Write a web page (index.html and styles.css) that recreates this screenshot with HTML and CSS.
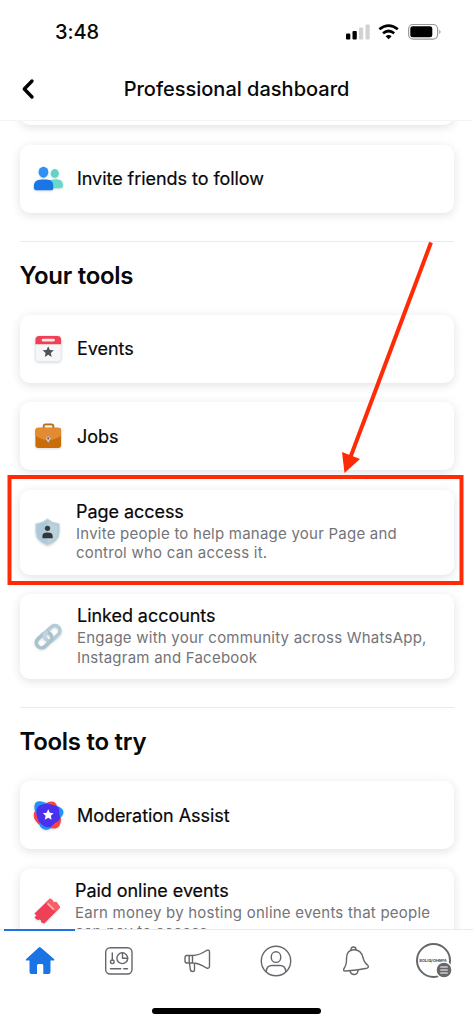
FILE: index.html
```html
<!DOCTYPE html>
<html lang="en">
<head>
<meta charset="utf-8">
<title>Professional dashboard</title>
<link rel="stylesheet" href="styles.css">
</head>
<body>
<div class="phone">
  <header class="top">
    <div class="status">
      <span class="time">3:48</span>
      <svg class="status-icons" width="98" height="20" viewBox="0 0 98 20">
        <rect x="1" y="12.500" width="4.300" height="6" rx="1"/>
        <rect x="7.500" y="10" width="4.300" height="8.500" rx="1"/>
        <g fill="#d2d2d2"><rect x="14" y="6.500" width="4.200" height="12" rx="1"/><rect x="20.500" y="3.500" width="4.200" height="15" rx="1"/></g>
        <g fill="none" stroke="#000" stroke-width="2.700"><path d="M34.400 8.300Q43.600 .8 52.800 8.300"/><path d="M38 12.200Q43.600 7.800 49.200 12.200"/></g>
        <path d="M40.600 15.200Q43.600 13 46.600 15.200L43.600 18.300Z"/>
        <rect x="63.600" y="3.500" width="29" height="14.600" rx="4.500" fill="none" stroke="#999" stroke-width="1.200"/>
        <rect x="65.300" y="5.300" width="22" height="11" rx="2.500"/>
        <path d="M94.300 8.500Q96.800 10.800 94.300 13Z" fill="#999"/>
      </svg>
    </div>
    <div class="titlebar">
      <svg class="back" width="16" height="22" viewBox="0 0 16 22"><path d="M12 3L4.300 11L12 19" fill="none" stroke="#000" stroke-width="3.400" stroke-linecap="round" stroke-linejoin="round"/></svg>
      <h1 class="title">Professional dashboard</h1>
    </div>
  </header>

  <main class="content">
    <div class="card card-previous"></div>
    <div class="card">
      <svg class="icon" viewBox="0 0 32 32">
        <ellipse cx="22.500" cy="10.800" rx="4.200" ry="4.500" fill="#62d3c4"/><path d="M17 17.800Q31 14 31 23Q31 26 28 26H17Z" fill="#66d9ca"/>
        <ellipse cx="10.800" cy="9.500" rx="5" ry="5.600" fill="#2e91f3"/><path d="M.8 25.500Q0 17 9 17H14Q22 17 21 26Q21 28 19 28H3Q1 28 .8 25.500Z" fill="#1976e8"/>
      </svg>
      <div class="name">Invite friends to follow</div>
    </div>
    <section class="section">
      <h2 class="heading">Your tools</h2>
      <div class="list">
        <div class="card">
          <svg class="icon" viewBox="0 0 32 32">
            <rect x="2.500" y="3" width="26.500" height="26.500" rx="4" fill="#f5f7f8" stroke="#e5e8eb" stroke-width=".8"/>
            <path d="M2.500 11.500V7Q2.500 3 6.500 3H25Q29 3 29 7V11.500Z" fill="#f13f55"/><rect x="9" y="6" width="13.500" height="2.700" rx="1.300" fill="#ffe9eb"/>
            <path d="M15.700 13.700L17.400 17.500L21.500 17.900L18.400 20.600L19.300 24.700L15.700 22.500L12.100 24.700L13 20.600L9.900 17.900L14 17.500Z" fill="#4d5358"/>
          </svg>
          <div class="name">Events</div>
        </div>
        <div class="card">
          <svg class="icon" viewBox="0 0 32 32">
            <path d="M11 8V5.500Q11 3.500 13 3.500H19Q21 3.500 21 5.500V8" fill="none" stroke="#bd6b0b" stroke-width="1.800"/>
            <rect x="2.500" y="7" width="26.500" height="20.800" rx="2.500" fill="#c96c09"/><path d="M2.500 15V9.500Q2.500 7 5 7H26.500Q29 7 29 9.500V15Q22 20 15.700 19.500Q9 20 2.500 15Z" fill="#e28b31"/>
            <path d="M15.700 15.500L18.300 18L15.700 22.500L13.100 18Z" fill="#cad1d5"/><circle cx="15.700" cy="18" r="1.100" fill="#5e6264"/>
          </svg>
          <div class="name">Jobs</div>
        </div>
        <div class="card tall">
          <svg class="icon" viewBox="0 0 32 32">
            <path d="M15 2Q20 6.500 27 7V16Q27 25 15 29Q3 25 3 16V7Q10 6.500 15 2Z" fill="#adc8d6" stroke="#c6d9e2" stroke-width="1"/>
            <path d="M15 4V27.500Q25 24 25.500 16V8.500Q19 7.500 15 4Z" fill="#bdd1dc"/>
            <circle cx="15" cy="11.700" r="2.700" fill="#383d40"/><path d="M9.700 22V19.500Q9.700 16 15 16Q20.300 16 20.300 19.500V22Z" fill="#30363a"/>
          </svg>
          <div class="copy access">
            <div class="name">Page access</div>
            <div class="desc">Invite people to help manage your Page and<br>control who can access it.</div>
          </div>
        </div>
        <div class="card tall">
          <svg class="icon" viewBox="0 0 32 32">
            <g fill="none" stroke-width="3.700"><rect x="10.800" y="7.300" width="18" height="10.600" rx="5.300" transform="rotate(-43 19.800 12.600)" stroke="#b4ccd7"/><rect x="2.500" y="14.500" width="18" height="10.600" rx="5.300" transform="rotate(-43 11.500 19.800)" stroke="#a9c2ce"/><path d="M14.500 10.500L12.500 13Q10.500 16 14 19" stroke="#bfd4de"/></g>
          </svg>
          <div class="copy">
            <div class="name">Linked accounts</div>
            <div class="desc">Engage with your community across WhatsApp,<br>Instagram and Facebook</div>
          </div>
        </div>
      </div>
    </section>
    <section class="section">
      <h2 class="heading">Tools to try</h2>
      <div class="list">
        <div class="card">
          <svg class="icon" viewBox="0 0 32 32">
            <path d="M14 3Q21 -.5 24 4L29 20Q28.500 28 23 29.500L10 28Q4 24 2 20Q-1 15 3 10Z" fill="#fa453f"/>
            <path d="M1.500 6Q2 0 9 1.500L27 7Q34 11 30 16.500L18 29.500Q12 33 7.500 27.500L2.500 13Q1 9 1.500 6Z" fill="#2492f1"/>
            <path d="M14.500 3Q21 0 24 5.500L18 9ZM2.500 14Q-.5 18 3.500 22L7 25V16ZM18 29Q26 31 28.200 19L20 23Z" fill="#fa453f"/>
            <path d="M3.500 11Q4 6 8.500 5L14.500 3.500L24 6Q28 8 27 13L28 18.500Q27 22 23 23.500L18 28Q14 29 10 26L6 22.500Q3 17 3.500 11Z" fill="#4931ed"/>
            <path d="M15.700 9.500L17.400 13.200L21.300 13.600L18.400 16.300L19.200 20.300L15.700 18.300L12.200 20.300L13 16.300L10.100 13.600L14 13.200Z" fill="#fff"/>
          </svg>
          <div class="name moderation">Moderation Assist</div>
        </div>
        <div class="card tall">
          <svg class="icon" viewBox="0 0 32 32">
            <path d="M1.500 18L17.500 2.500L20 4Q20.500 7 24 6L28 11.500L26 14L11.500 28.500L8.500 27Q8.500 23 5 25L1.500 22.500L3.500 20Z" fill="#ee4058"/><path d="M17.500 2.500L20 4Q20.500 7 24 6L28 11.500L23 16L13 7Z" fill="#f26268"/><path d="M15 7.500L21.500 14" stroke="#ffb2a5" stroke-width="1.800"/>
          </svg>
          <div class="copy paid-copy">
            <div class="name">Paid online events</div>
            <div class="desc">Earn money by hosting online events that people<br>can pay to access.</div>
          </div>
        </div>
      </div>
    </section>
  </main>

  <nav class="tabs">
    <div class="tab active"><svg width="32" height="32" viewBox="0 0 32 32"><path d="M15.500 2Q16 1.800 17 2.700L30 14Q31 15.500 29 15.500H26.500V27Q26.500 29 24.500 29H19.300V20.500Q19.300 19 18 19H14.500Q13 19 13 20.500V29H7.500Q5.500 29 5.500 27V15.500H3Q1 15.500 2.200 14L14.500 2.800Z" fill="#1b74e4"/></svg></div>
    <div class="tab"><svg width="32" height="32" viewBox="0 0 32 32"><rect x="2.700" y="2.700" width="26.300" height="26.300" rx="4.500"/><path d="M9.300 8V15"/><circle cx="9.300" cy="16.800" r="1.800"/><circle cx="19.300" cy="13.200" r="5.400"/><path d="M19.500 7.800V13.200H24.700M7.500 23.700H17.800M20.700 23.700H24.500"/></svg></div>
    <div class="tab"><svg width="32" height="32" viewBox="0 0 32 32"><path d="M10.500 10.500H5Q3 10.500 3 13V15.500Q3 18 5 18H10.500M7.200 10.500V18M10.500 10.500V18Q17 18 24.500 23Q27.500 24 27.500 21V7Q27.500 4.200 24.500 5.500Q17 10.500 10.500 10.500M7.500 18L8.300 24.500Q8.700 26.500 10.700 26.500Q12.700 26.500 12.500 24.500V18.200"/></svg></div>
    <div class="tab"><svg width="32" height="32" viewBox="0 0 32 32"><circle cx="16" cy="16" r="14.700"/><rect x="11.300" y="6.800" width="9.400" height="10.600" rx="4.700"/><path d="M6.300 26.500Q6.500 20.500 12 20.500H20Q25.500 20.500 25.700 26.500"/></svg></div>
    <div class="tab"><svg width="32" height="32" viewBox="0 0 32 32"><path d="M12.200 5.500Q11.500 2 14.500 2Q17 2 17 4.500M5.300 25.800Q4.300 25.600 4.800 24Q7.500 20 7.500 16V13.500Q7.500 4.700 15 4.700Q22 4.700 24 12.500Q25 17.500 29 20.500Q30 22.500 28 23.200Q18 25.500 6.500 26Z"/><path d="M11 26Q12 29.700 15.500 29.500Q19 29 19 25"/></svg></div>
    <div class="tab"><div class="avatar"><span class="brand">SOLIQ/OHMIA</span><svg class="badge" width="18" height="18" viewBox="0 0 18 18"><circle cx="9" cy="9" r="8" fill="#65676b" stroke="#fff"/><path d="M5.700 6H12.300M5.700 9H12.300M5.700 12H12.300" stroke="#fff" stroke-width="1.200"/></svg></div></div>
  </nav>
  <div class="home-indicator"></div>
  <svg class="annotation" width="473" height="1024" viewBox="0 0 473 1024"><rect x="9.500" y="477" width="452" height="106" fill="none" stroke="#ff2b06" stroke-width="4"/><path d="M431 242.500L350.500 457" stroke="#ff2b06" stroke-width="4"/><path d="M342 452L360 459L344.500 473Z" fill="#ff2b06"/></svg>
</div>
</body>
</html>
```
FILE: styles.css
```css
* { box-sizing: border-box; }
body { margin: 0; background: #fff; color: #080809; font-family: Inter, "Liberation Sans", sans-serif; }
.phone { position: relative; display: flex; flex-direction: column; width: 473px; height: 1024px; overflow: hidden; background: #fff; }
.top { flex: none; height: 121px; border-bottom: 1px solid #f4f4f4; }
.status { display: flex; justify-content: space-between; padding: 20px 30px 0 55px; height: 60px; }
.status-icons { margin-top: .5px; }
.time { font-size: 20px; line-height: 25px; font-weight: 500; letter-spacing: -.1px; }
.titlebar { display: flex; align-items: center; height: 57px; padding-left: 20px; }
.title { flex: 1; margin: 0 36px 0 0; text-align: center; font-size: 20px; line-height: 26px; font-weight: 500; }
.content { flex: none; height: 808px; overflow: hidden; padding: 0 19.5px; }
.card { display: flex; align-items: center; height: 68px; padding-left: 13.5px; border-radius: 10px; background: #fff; box-shadow: 0 3px 8px rgba(35,55,75,.10), 0 0 14px rgba(35,55,75,.045); }
.card.tall { height: 85px; }
.card-previous { margin-top: -64px; margin-bottom: 19.500px; }
.icon { flex: none; width: 31px; height: 31px; margin-right: 13px; filter: drop-shadow(0 1px 1px rgba(30,60,80,.18)); }
.name { font-size: 18px; line-height: 23px; font-weight: 400; letter-spacing: -.05px; -webkit-text-stroke: .2px currentColor; white-space: nowrap; }
.copy { padding-bottom: 1px; }
.copy .name { line-height: 22.500px; }
.desc { padding-top: .5px; font-size: 15px; line-height: 19.500px; letter-spacing: .23px; color: #737478; white-space: nowrap; }
.access { margin-left: -1px; }
.paid-copy { margin-left: -2px; }
.section { margin-top: 28px; border-top: 1px solid #e9eaeb; }
.heading { margin: 0; padding-top: 19px; height: 73px; font-size: 24px; line-height: 30px; font-weight: 600; letter-spacing: -.28px; }
.list { display: flex; flex-direction: column; gap: 19.500px; }
.tabs { flex: none; position: relative; display: flex; height: 95px; border-top: 1px solid #e9e9ea; background: #fff; }
.tab { width: 78.830px; display: flex; justify-content: center; padding: 15px 0 0 1px; height: 60px; }
.tab svg { flex: none; fill: none; stroke: #65676b; stroke-width: 1.400; stroke-linecap: round; stroke-linejoin: round; }
.tab.active svg { stroke: none; }
.tab.active::before { content: ""; position: absolute; left: 4px; top: -1px; width: 71px; height: 2px; background: #1b74e4; }
.avatar { position: relative; width: 35px; height: 35px; margin: -2px 2px 0 0; border: 2px solid #65676b; border-radius: 50%; display: flex; align-items: center; justify-content: center; }
.brand { font-size: 4px; font-weight: 700; white-space: nowrap; color: #444; }
.tab .badge { position: absolute; right: -4px; bottom: -3px; stroke: none; }
.home-indicator { position: absolute; left: 152px; top: 1008px; width: 169px; height: 6px; border-radius: 3px; background: #000; }
.annotation { position: absolute; left: 0; top: 0; pointer-events: none; }
```
